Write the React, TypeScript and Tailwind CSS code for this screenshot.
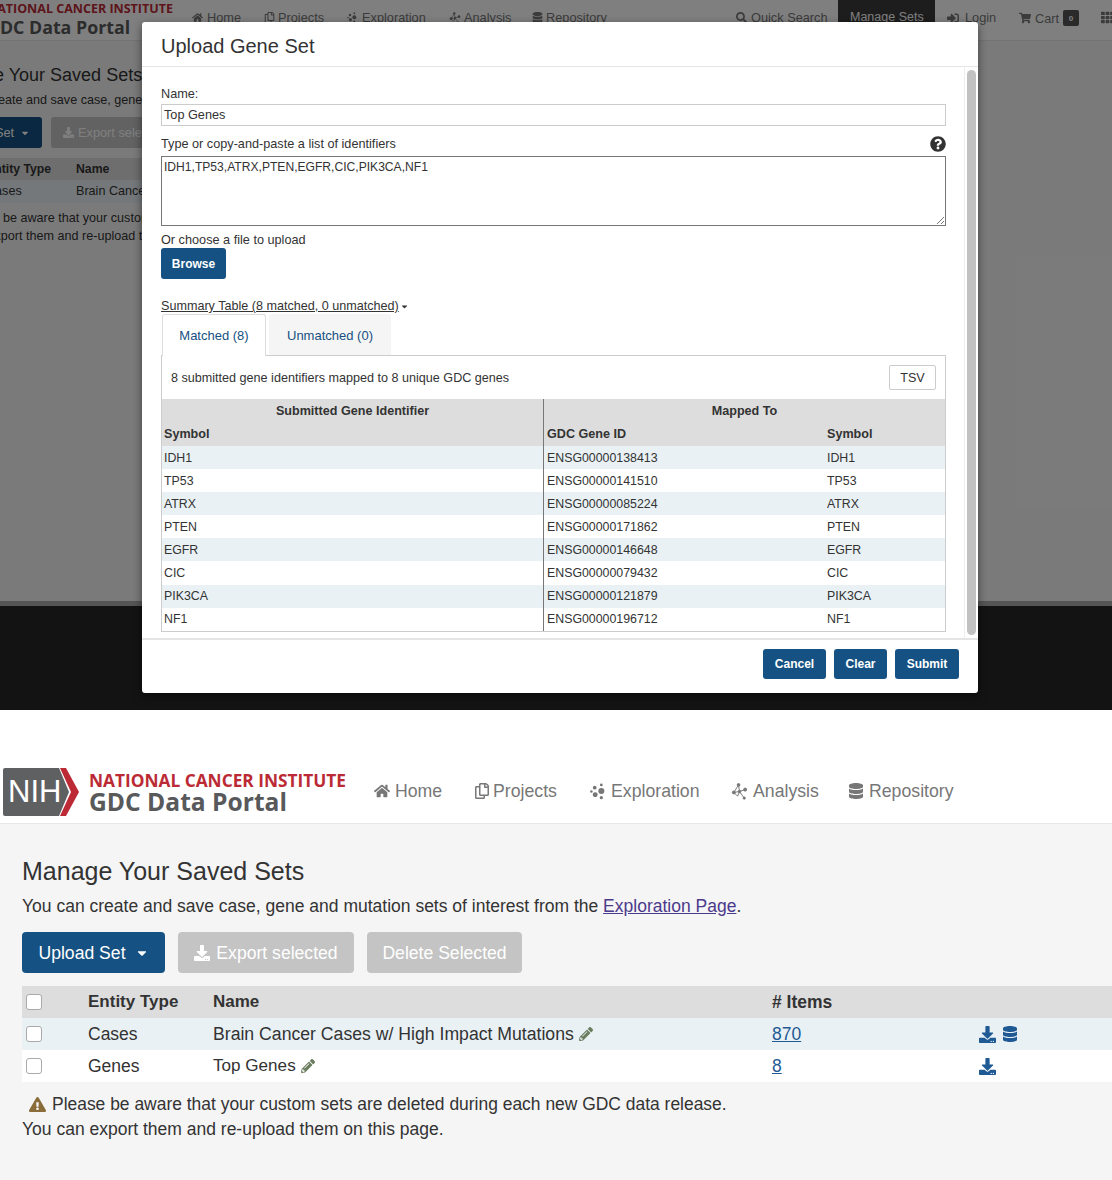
import { FaCaretDown, FaDatabase, FaDownload, FaExclamationTriangle, FaHome, FaPencilAlt, FaQuestionCircle, FaRegCopy, FaSearch, FaShoppingCart, FaSignInAlt, FaTh } from "react-icons/fa";

const genes = [
  ["IDH1", "ENSG00000138413"],
  ["TP53", "ENSG00000141510"],
  ["ATRX", "ENSG00000085224"],
  ["PTEN", "ENSG00000171862"],
  ["EGFR", "ENSG00000146648"],
  ["CIC", "ENSG00000079432"],
  ["PIK3CA", "ENSG00000121879"],
  ["NF1", "ENSG00000196712"],
];

function ExplorationIcon({ className }: { className?: string }) {
  return (
    <svg viewBox="0 0 18 18" className={className} fill="currentColor">
      <circle cx="12" cy="8.5" r="3.2" />
      <circle cx="5.5" cy="12.5" r="2.6" />
      <circle cx="5" cy="5" r="2" />
      <circle cx="12" cy="2" r="1.5" />
      <circle cx="1.5" cy="9" r="1.3" />
      <circle cx="12" cy="15.5" r="1.7" />
    </svg>
  );
}

function AnalysisIcon({ className }: { className?: string }) {
  return (
    <svg viewBox="0 0 18 18" className={className} fill="none" stroke="currentColor" strokeWidth="1">
      <path d="M8 2 L3 10 L9 9 L15 7 M8 2 L9 9 L14 16 M3 10 L7 14 L9 9" />
      <circle cx="8" cy="2" r="1.4" fill="currentColor" />
      <circle cx="15" cy="7" r="1.6" fill="currentColor" />
      <circle cx="3" cy="10" r="1.6" fill="currentColor" />
      <circle cx="9" cy="9" r="1.3" fill="currentColor" />
      <circle cx="14" cy="16" r="1.2" fill="currentColor" />
    </svg>
  );
}

function TopPage() {
  return (
    <div className="relative h-[710px] overflow-hidden bg-[#f5f5f5] font-['Liberation_Sans',sans-serif] text-[#333]">
      <div className="flex h-[41px] border-b border-[#e7e7e7] bg-white">
        <div className="-ml-[13px] w-[205px] shrink-0 pt-[2px]">
          <div className="font-['Open_Sans',sans-serif] text-[12.5px] leading-[14px] font-bold whitespace-nowrap text-[#bb2a35]">NATIONAL CANCER INSTITUTE</div>
          <div className="mt-[1px] font-['Open_Sans',sans-serif] text-[17.8px] leading-[20px] font-bold whitespace-nowrap text-[#58595b]">GDC Data Portal</div>
        </div>
        <div className="flex shrink-0 pt-[10px] text-[12.75px] leading-[15px] whitespace-nowrap text-[#777]">
          <span className="flex w-[72px] items-center gap-[4px] self-start"><FaHome className="size-[11px]" />Home</span>
          <span className="flex w-[83px] items-center gap-[3px] self-start"><FaRegCopy className="size-[11px]" />Projects</span>
          <span className="flex w-[102px] items-center gap-[4px] self-start"><ExplorationIcon className="size-[11px]" />Exploration</span>
          <span className="flex w-[83px] items-center gap-[3px] self-start"><AnalysisIcon className="size-[12px]" />Analysis</span>
          <span className="flex w-[204px] items-center gap-[3px] self-start"><FaDatabase className="size-[11px]" />Repository</span>
          <span className="flex w-[102px] items-center gap-[4px] self-start"><FaSearch className="size-[11px] shrink-0" />Quick Search</span>
        </div>
        <div className="h-[40px] w-[97px] shrink-0 bg-[#3a3a3a] pt-[10px] pl-[12px] text-[12.5px] leading-[15px] whitespace-nowrap text-white">Manage Sets</div>
        <div className="flex shrink-0 items-start pt-[10px] pl-[12px] text-[12.75px] leading-[15px] text-[#777]">
          <span className="flex w-[72px] items-center gap-[6px]"><FaSignInAlt className="size-[12px]" />Login</span>
          <span className="flex items-center gap-[4px]"><FaShoppingCart className="size-[12px]" />Cart<span className="flex h-[16px] w-[16px] items-center justify-center rounded-[2px] bg-[#555] text-[8px] font-bold text-white">0</span></span>
          <FaTh className="mt-[1px] ml-[22px] size-[13px]" />
        </div>
      </div>

      <div className="-ml-[61px] w-[900px]">
        <div className="mt-[21px] text-[18px] leading-[26px] whitespace-nowrap">Manage Your Saved Sets</div>
        <div className="mt-[4px] text-[12.6px] leading-[16px] whitespace-nowrap">You can create and save case, gene and mutation sets of interest from the Exploration Page.</div>
        <div className="mt-[9px] flex gap-[9px] text-[12.75px] leading-[15px] text-white">
          <span className="flex h-[31px] w-[103px] items-center justify-center gap-[6px] rounded-[3px] bg-[#155182]">Upload Set<FaCaretDown className="size-[10px]" /></span>
          <span className="flex h-[31px] w-[127px] items-center justify-center gap-[4px] rounded-[3px] bg-[#c4c4c4]"><FaDownload className="size-[11px]" />Export selected</span>
        </div>
        <div className="mt-[10px] grid h-[22px] grid-cols-[47px_90px_1fr] items-center bg-[#ddd] text-[12.25px] font-bold">
          <span className="col-start-2">Entity Type</span>
          <span>Name</span>
        </div>
        <div className="grid h-[23px] grid-cols-[47px_90px_1fr] items-center bg-[#e9f1f5] text-[12.6px]">
          <span className="col-start-2">Cases</span>
          <span className="whitespace-nowrap">Brain Cancer Cases w/ High Impact Mutations</span>
        </div>
        <div className="mt-[6px] pl-[22px] text-[12.6px] leading-[18px] whitespace-nowrap">Please be aware that your custom sets are deleted</div>
        <div className="text-[12.6px] leading-[18px] whitespace-nowrap">You can export them and re-upload them on this page.</div>
      </div>

      <div className="absolute inset-x-0 top-[601px] bottom-0 border-t-[5px] border-[#aaa] bg-[#262626]" />
      <div className="absolute inset-0 bg-black/50" />

      <div className="absolute top-[22px] left-[142px] flex h-[671px] w-[836px] flex-col rounded-[3px] bg-white text-[12.7px] shadow-[0_3px_9px_rgba(0,0,0,0.5)]">
        <div className="h-[45px] shrink-0 border-b border-[#e5e5e5] pt-[10px] pl-[19px] text-[20px] leading-[28px]">Upload Gene Set</div>
        <div className="flex min-h-0 flex-1">
          <div className="min-w-0 flex-1 pt-[20px] pl-[19px] pr-[18px]">
            <div className="leading-[15px]">Name:</div>
            <div className="mt-[2px] flex h-[22px] items-center border border-[#ccc] pt-[1px] pl-[2px]">Top Genes</div>
            <div className="mt-[8px] mb-[2px] flex h-[20px] items-center justify-between">
              <span className="pt-[1px]">Type or copy-and-paste a list of identifiers</span>
              <FaQuestionCircle className="size-[16px] text-[#333]" />
            </div>
            <div className="relative h-[70px] border border-[#777] pt-[2px] pl-[2px] text-[12.1px] leading-[16px]">
              IDH1,TP53,ATRX,PTEN,EGFR,CIC,PIK3CA,NF1
              <svg viewBox="0 0 8 8" className="absolute right-[1px] bottom-[1px] size-[8px]" stroke="#777" strokeWidth="1">
                <path d="M1 8 L8 1 M5 8 L8 5" />
              </svg>
            </div>
            <div className="mt-[6px] leading-[16px]">Or choose a file to upload</div>
            <div className="flex h-[31px] w-[65px] items-center justify-center rounded-[3px] bg-[#155182] text-[12px] font-bold text-white">Browse</div>
            <div className="mt-[20px] flex items-center gap-[1px] text-[12.6px] leading-[15px]">
              <span className="underline">Summary Table (8 matched, 0 unmatched)</span>
              <FaCaretDown className="size-[9px]" />
            </div>
            <div className="flex h-[42px] border-b border-[#ccc] pl-[1px] text-[13px] text-[#155182]">
              <div className="flex h-[42px] w-[104px] items-center justify-center rounded-t-[3px] border-x border-t border-[#ddd] bg-white">Matched (8)</div>
              <div className="ml-[3px] flex h-[41px] w-[122px] items-center justify-center rounded-t-[3px] bg-[#f5f5f5] pt-[2px]">Unmatched (0)</div>
            </div>
            <div className="border-x border-b border-[#ccc] text-[12.35px]">
              <div className="flex h-[43px] items-center justify-between pr-[9px] pl-[9px] text-[12.6px]">
                <span className="pt-[1px]">8 submitted gene identifiers mapped to 8 unique GDC genes</span>
                <span className="flex h-[25px] w-[47px] items-center justify-center rounded-[2px] border border-[#ccc] pt-[1px]">TSV</span>
              </div>
              <div className="grid grid-cols-[382px_1fr]">
                <div className="border-r border-[#777]">
                  <div className="flex h-[23px] items-center justify-center bg-[#ddd] pt-[1px] text-[12.6px] font-bold">Submitted Gene Identifier</div>
                  <div className="flex h-[24px] items-center bg-[#ddd] pl-[2px] text-[12.6px] font-bold">Symbol</div>
                  {genes.map(([symbol], i) => (
                    <div key={symbol} className={`flex h-[23.1px] items-center pl-[2px] ${i % 2 === 0 ? "bg-[#e9f1f5]" : "bg-white"}`}><span className="pt-[1px]">{symbol}</span></div>
                  ))}
                </div>
                <div>
                  <div className="flex h-[23px] items-center justify-center bg-[#ddd] pt-[1px] text-[12.6px] font-bold">Mapped To</div>
                  <div className="grid h-[24px] grid-cols-[280px_1fr] items-center bg-[#ddd] pl-[3px] text-[12.6px] font-bold">
                    <span>GDC Gene ID</span>
                    <span>Symbol</span>
                  </div>
                  {genes.map(([symbol, id], i) => (
                    <div key={id} className={`grid h-[23.1px] grid-cols-[280px_1fr] items-center pl-[3px] ${i % 2 === 0 ? "bg-[#e9f1f5]" : "bg-white"}`}>
                      <span className="pt-[1px]">{id}</span>
                      <span className="pt-[1px]">{symbol}</span>
                    </div>
                  ))}
                </div>
              </div>
            </div>
          </div>
          <div className="w-[14px] shrink-0 border-l border-[#eee] px-[2px] pt-[3px] pb-[3px]">
            <div className="h-full rounded-full bg-[#c1c1c1]" />
          </div>
        </div>
        <div className="flex h-[55px] shrink-0 items-start justify-end gap-[8px] border-t-2 border-[#e5e5e5] pt-[9px] pr-[19px] text-[12px] font-bold text-white">
          <span className="flex h-[30px] w-[63px] items-center justify-center rounded-[3px] bg-[#155182]">Cancel</span>
          <span className="flex h-[30px] w-[53px] items-center justify-center rounded-[3px] bg-[#155182]">Clear</span>
          <span className="flex h-[30px] w-[64px] items-center justify-center rounded-[3px] bg-[#155182]">Submit</span>
        </div>
      </div>
    </div>
  );
}

function Checkbox() {
  return <span className="block size-[16px] rounded-[3px] border border-[#aaa] bg-white" />;
}

function BottomPage() {
  return (
    <div className="h-[470px] overflow-hidden bg-[#f5f5f5] font-['Liberation_Sans',sans-serif] text-[#333]">
      <div className="flex h-[114px] items-end border-b border-[#e7e7e7] bg-white pb-[7px]">
        <svg viewBox="0 0 78 48" className="ml-[3px] h-[48px] w-[78px] shrink-0">
          <path d="M2 0 H56 L66 24 L56 48 H2 Q0 48 0 46 V2 Q0 0 2 0 Z" fill="#5f6062" />
          <path d="M57 0 H63 L76 24 L63 48 H57 L68 24 Z" fill="#bb2a35" />
          <text x="5" y="34" fill="#fff" fontFamily="Liberation Sans, sans-serif" fontSize="31">NIH</text>
        </svg>
        <div className="ml-[8px] w-[285px] shrink-0">
          <div className="font-['Open_Sans',sans-serif] text-[17.3px] leading-[20px] font-bold whitespace-nowrap text-[#bb2a35]">NATIONAL CANCER INSTITUTE</div>
          <div className="-mt-[3px] font-['Open_Sans',sans-serif] text-[24.6px] leading-[28px] font-bold whitespace-nowrap text-[#58595b]">GDC Data Portal</div>
        </div>
        <div className="mb-[14px] flex text-[17.7px] leading-[22px] whitespace-nowrap text-[#777]">
          <span className="flex w-[100px] items-center gap-[5px]"><FaHome className="size-[16px]" />Home</span>
          <span className="flex w-[116px] items-center gap-[3px]"><FaRegCopy className="size-[16px]" />Projects</span>
          <span className="flex w-[141px] items-center gap-[4px]"><ExplorationIcon className="size-[17px]" />Exploration</span>
          <span className="flex w-[117px] items-center gap-[5px]"><AnalysisIcon className="size-[17px]" />Analysis</span>
          <span className="flex items-center gap-[5px]"><FaDatabase className="size-[16px]" />Repository</span>
        </div>
      </div>

      <div className="pl-[22px]">
        <h1 className="mt-[31px] text-[25px] leading-[32px]">Manage Your Saved Sets</h1>
        <p className="mt-[7px] text-[17.5px] leading-[24px]">
          You can create and save case, gene and mutation sets of interest from the <span className="text-[#4c3a8c] underline">Exploration Page</span>.
        </p>
        <div className="mt-[14px] flex gap-[13px] text-[17.6px] leading-[22px] text-white">
          <span className="flex h-[41px] w-[143px] items-center justify-center gap-[9px] rounded-[4px] bg-[#155182]">Upload Set<FaCaretDown className="size-[14px]" /></span>
          <span className="flex h-[41px] w-[176px] items-center justify-center gap-[6px] rounded-[4px] bg-[#c4c4c4]"><FaDownload className="size-[16px]" />Export selected</span>
          <span className="flex h-[41px] w-[155px] items-center justify-center rounded-[4px] bg-[#c4c4c4]">Delete Selected</span>
        </div>
        <div className="mt-[13px] text-[17.5px]">
          <div className="grid h-[32px] grid-cols-[62px_125px_559px_207px_1fr] items-center bg-[#ddd] pl-[4px] text-[17px] font-bold">
            <Checkbox />
            <span>Entity Type</span>
            <span>Name</span>
            <span className="text-[17.5px]"># Items</span>
          </div>
          <div className="grid h-[32px] grid-cols-[62px_125px_559px_207px_1fr] items-center bg-[#e9f1f5] pl-[4px]">
            <Checkbox />
            <span>Cases</span>
            <span className="flex items-center gap-[5px] text-[17.65px]">Brain Cancer Cases w/ High Impact Mutations<FaPencilAlt className="size-[14px] text-[#6b7d5f]" /></span>
            <span className="text-[#1f5a94] underline">870</span>
            <span className="flex items-center gap-[6px] text-[#1f5a94]"><FaDownload className="size-[17px]" /><FaDatabase className="size-[16px]" /></span>
          </div>
          <div className="grid h-[32px] grid-cols-[62px_125px_559px_207px_1fr] items-center bg-white pl-[4px]">
            <Checkbox />
            <span>Genes</span>
            <span className="flex items-center gap-[5px] text-[17.1px]">Top Genes<FaPencilAlt className="size-[14px] text-[#6b7d5f]" /></span>
            <span className="text-[#1f5a94] underline">8</span>
            <span className="text-[#1f5a94]"><FaDownload className="size-[17px]" /></span>
          </div>
        </div>
        <div className="mt-[10px] flex items-center gap-[6px] pl-[7px] text-[17.45px] leading-[25px]">
          <FaExclamationTriangle className="size-[17px] text-[#8a6d3b]" />
          Please be aware that your custom sets are deleted during each new GDC data release.
        </div>
        <div className="text-[17.5px] leading-[25px]">You can export them and re-upload them on this page.</div>
      </div>
    </div>
  );
}

export default function App() {
  return (
    <div className="w-[1112px]">
      <TopPage />
      <BottomPage />
    </div>
  );
}
